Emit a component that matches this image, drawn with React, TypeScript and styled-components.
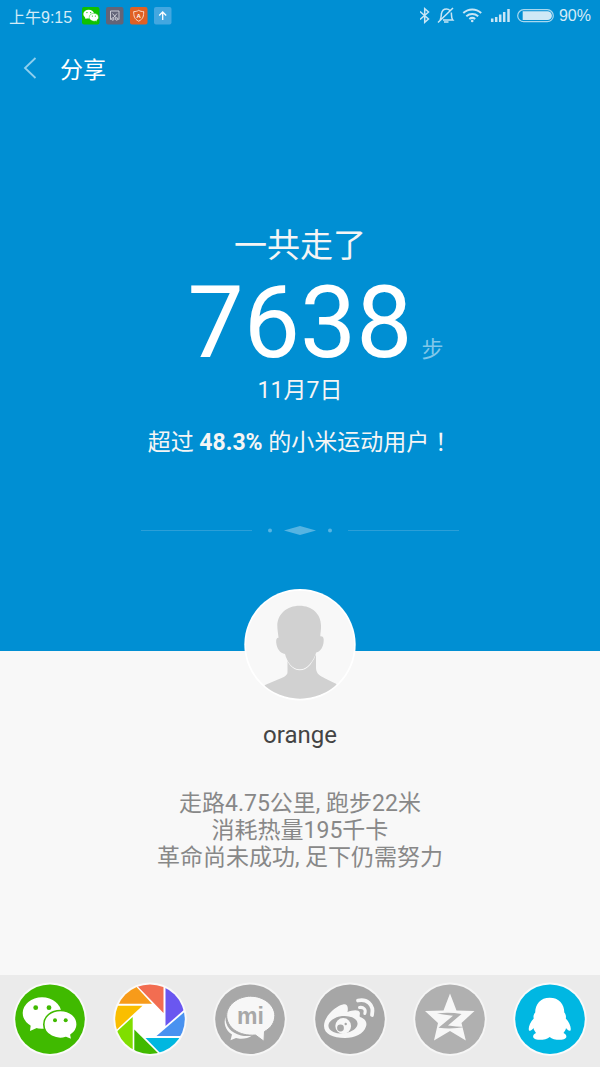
import React from 'react';
import styled, { createGlobalStyle } from 'styled-components';

const GlobalStyle = createGlobalStyle`
  * { box-sizing: border-box; }
  html, body { margin: 0; background: #f8f8f8; }
  body { font-family: Roboto, "Noto Sans CJK SC", sans-serif; }
`;

const Page = styled.div`
  display: flex;
  flex-direction: column;
  min-height: 100vh;
`;

const Hero = styled.section`
  background: #008fd3;
  color: #fff;
  padding-bottom: 115px;
`;

const StatusBar = styled.div`
  display: flex;
  align-items: center;
  justify-content: space-between;
  height: 32px;
  padding: 0 9px;
  color: #d4ebf7;
  font-family: "Liberation Sans", "Noto Sans CJK SC", sans-serif;
  font-size: 16px;
`;

const StatusGroup = styled.div<{ $gap: number }>`
  display: flex;
  align-items: center;
  gap: ${(p) => p.$gap}px;
`;

const Clock = styled.span`
  padding-right: 4px;
`;

const Header = styled.header`
  display: flex;
  align-items: center;
  gap: 20px;
  height: 72px;
  padding: 0 20px;
`;

const BackButton = styled.button`
  display: flex;
  padding: 0;
  border: 0;
  background: none;
`;

const Title = styled.h1`
  margin: 0;
  padding-top: 5px;
  font-size: 23px;
  font-weight: 400;
  line-height: 32px;
`;

const Summary = styled.div`
  display: flex;
  flex-direction: column;
  align-items: center;
  padding-top: 120px;
`;

const Line = styled.p<{ $size: number; $height: number }>`
  margin: 0;
  font-size: ${(p) => p.$size}px;
  line-height: ${(p) => p.$height}px;
  color: #f5f5f5;
`;

/* Traditional Chinese fonts centre full-width punctuation in its cell. */
const CentredMark = styled.span`
  font-family: "Noto Sans CJK TC", sans-serif;
  line-height: 1;
`;

const Steps = styled.div`
  display: grid;
  grid-template-columns: 1fr auto 1fr;
  align-items: baseline;
  column-gap: 9px;
  width: 100%;
  height: 97px;
`;

const StepCount = styled.strong`
  grid-column: 2;
  font-size: 100px;
  font-weight: 400;
  line-height: 110px;
`;

const StepUnit = styled.span`
  font-size: 22px;
  color: #80c7e9;
`;

const Divider = styled.svg`
  display: block;
  margin: 55px auto 0;
`;

const Profile = styled.section`
  flex: 1;
  display: flex;
  flex-direction: column;
  align-items: center;
  background: #f8f8f8;
`;

const Avatar = styled.svg`
  display: block;
  margin-top: -62px;
`;

const Name = styled.h2`
  margin: 20px 0 0;
  color: #444;
  font-size: 24px;
  font-weight: 400;
  line-height: 28px;
`;

const Details = styled.p`
  margin: 41px 0 0;
  color: #888;
  font-size: 23px;
  line-height: 27px;
  text-align: center;
`;

const ShareBar = styled.nav`
  display: flex;
  justify-content: space-around;
  padding: 6px 0 10px;
  background: #ebebeb;
`;

const ShareButton = styled.button`
  display: flex;
  padding: 0;
  border: 0;
  background: none;
`;

const WeChatMark = ({ ground }: { ground: string }) => (
  <g>
    <ellipse cx="30" cy="32" rx="19.300" ry="15.700" fill="#fff" />
    <path fill="#fff" d="M19 42L18 50L27 46z" />
    <circle cx="23.700" cy="26.700" r="2.400" fill={ground} />
    <circle cx="37" cy="26.700" r="2.400" fill={ground} />
    <path
      fill="#fff"
      stroke={ground}
      strokeWidth="1.600"
      d="M60 59L54 56.500C45 59.500 31.800 54.500 31.800 43.500C31.800 35.500 39 29.500 48.500 29.500C58 29.500 65.200 35.500 65.200 43.500C65.200 48 62.500 51.500 59 54z"
    />
    <circle cx="43" cy="39.300" r="2" fill={ground} />
    <circle cx="53.700" cy="39.300" r="2" fill={ground} />
  </g>
);

const Disc = ({ fill, ring, children }: { fill: string; ring: string; children: React.ReactNode }) => (
  <svg width="76" height="76" viewBox="0 0 76 76" aria-hidden="true">
    <circle cx="38" cy="38.200" r="36.700" fill={ring} />
    <circle cx="38" cy="38.200" r="34.800" fill={fill} />
    {children}
  </svg>
);

const WeChat = () => (
  <Disc fill="#40ba00" ring="#fafafa">
    <WeChatMark ground="#40ba00" />
  </Disc>
);

const Moments = () => (
  <Disc fill="#fff" ring="#fafafa">
    <clipPath id="shutter">
      <circle cx="38" cy="38.200" r="34.800" />
    </clipPath>
    <g clipPath="url(#shutter)">
      <path fill="#f26d51" d="M26.300 6L20 0H51.500V32z" />
      <path fill="#6a57f0" d="M53.500 0H76V25.500L53.500 45z" />
      <path fill="#4992f0" d="M76 28V55H44.500z" />
      <path fill="#00b7e0" d="M33.500 57H76V76H52z" />
      <path fill="#41b900" d="M22.300 48.500L50 76H22.300z" />
      <path fill="#80de00" d="M0 55L20.700 36V76H0z" />
      <path fill="#fabe00" d="M0 24.700H30.500L0 53z" />
      <path fill="#f79b1a" d="M0 22.700V0H19L40 22.700z" />
    </g>
  </Disc>
);

const MiTalk = () => (
  <Disc fill="#a8a8a8" ring="#f5f5f5">
    <path fill="#f7f7f7" d="M13.500 36C13 45 19 52 29 54.500C34 55.500 37 55 40 54.500C36 58 28 58.500 24 57L18.500 59.200L20 53.500C13 49 11.500 42 13.500 36z" />
    <path
      fill="#f7f7f7"
      stroke="#a8a8a8"
      d="M38.700 15.200C51.500 15.200 62.800 24 62.800 34.500C62.800 41.500 59 47 52.500 50.500L52 60.300L43.500 54C27 55.500 14.700 46.500 14.700 34.500C14.700 24 26 15.200 38.700 15.200z"
    />
    <text x="38.500" y="43" fill="#a8a8a8" fontFamily="Liberation Sans" fontWeight="700" fontSize="23" textAnchor="middle">
      mi
    </text>
  </Disc>
);

const Weibo = () => (
  <Disc fill="#a6a6a6" ring="#f5f5f5">
    <path fill="#f7f7f7" d="M12 45C12 35 24 25 31 23.500C35.500 22.500 36.500 26.500 35.500 31C40 29 47 28 47.800 31.500C48.300 33.500 47 35 48 36C53 37.500 55.500 41 54 45.500C51.500 53 43 57 33 57C21 57 12 53 12 45z" />
    <ellipse cx="31" cy="43.700" rx="14.600" ry="8.700" fill="#a6a6a6" transform="rotate(-6 31 43.700)" />
    <circle cx="31.200" cy="45" r="7.900" fill="#f7f7f7" />
    <circle cx="28.500" cy="47" r="3.400" fill="#a6a6a6" />
    <circle cx="33.700" cy="43" r="1.200" fill="#a6a6a6" />
    <g fill="none" stroke="#f7f7f7" strokeLinecap="round">
      <path strokeWidth="3.800" d="M46 19.500C54 17.500 62.500 23 60 34" />
      <path strokeWidth="3" d="M47.500 26.500C51.500 25.800 54.300 28.500 52.800 32.500" />
    </g>
  </Disc>
);

const Qzone = () => (
  <Disc fill="#b0b0b0" ring="#f5f5f5">
    <path fill="#f7f7f7" d="M38 12.500L44.500 29.500L62.500 30L49.500 42L53.800 59.500L38 50L22 59.500L26 42L13 30L31.500 29.500z" />
    <path fill="#b0b0b0" d="M25 32.500Q37 31 49.500 33L36 44.500Q44 45.500 53 46Q39 48.500 26.500 46.700L41 34.800Q33 34 25 32.500z" />
  </Disc>
);

const QQ = () => (
  <Disc fill="#00b7e2" ring="#fafafa">
    <path
      fill="#fff"
      d="M37.700 16.700C47 16.700 52.300 23 52.300 31.500C54 33.500 54.200 35.500 53.800 37.500C57.500 41.500 59.500 46.500 58.500 49.500C57 50.500 55 48.500 54 47C54 48.500 52.500 50.500 51.500 52C56 54 55.500 58.800 48 58.800C43.500 58.800 39.700 58 37.700 56C35.700 58 31.700 58.800 27.500 58.800C20 58.800 19.500 54 24 52C23 50.500 21.500 48.500 21.500 47C20.500 48.500 18.500 50.500 17 49.500C16 46.500 18 41.500 21.700 37.500C21.200 35.500 21.500 33.500 23.200 31.500C23.200 23 28.500 16.700 37.700 16.700z"
    />
  </Disc>
);

const Tile = ({ fill, children }: { fill: string; children: React.ReactNode }) => (
  <svg width="18" height="18" viewBox="0 0 18 18" aria-hidden="true">
    <rect width="17.500" height="17.500" rx="2" fill={fill} />
    {children}
  </svg>
);

const shareTargets = [
  { label: '微信', Icon: WeChat },
  { label: '朋友圈', Icon: Moments },
  { label: '米聊', Icon: MiTalk },
  { label: '微博', Icon: Weibo },
  { label: 'QQ空间', Icon: Qzone },
  { label: 'QQ', Icon: QQ },
];

export default function App() {
  return (
    <Page>
      <GlobalStyle />
      <Hero>
        <StatusBar>
          <StatusGroup $gap={6}>
            <Clock>上午9:15</Clock>
            <Tile fill="#0fc100">
              <g transform="translate(-1.700 -1.900) scale(.28)">
                <WeChatMark ground="#0fc100" />
              </g>
            </Tile>
            <Tile fill="#636478">
              <g fill="none" stroke="#d6d6de" strokeWidth=".9">
                <path d="M5 12.500H4.500V4H13V12.500H12.500M6.500 6.500L10.200 11M11 6.500L7.300 11" />
                <circle cx="6.800" cy="12" r="1.200" />
                <circle cx="10.700" cy="12" r="1.200" />
              </g>
            </Tile>
            <Tile fill="#e06024">
              <path fill="none" stroke="#fbd9c6" d="M8.700 3.300C10.200 4.300 11.700 4.600 13.700 4.600C13.700 9 13.200 12 8.700 14.200C4.200 12 3.700 9 3.700 4.600C5.700 4.600 7.200 4.300 8.700 3.300z" />
              <text x="8.700" y="10.800" fill="#fff" fontFamily="Liberation Sans" fontWeight="700" fontSize="6" textAnchor="middle">
                A
              </text>
            </Tile>
            <Tile fill="#43a7e0">
              <path fill="none" stroke="#fff" strokeWidth="1.300" d="M8.700 13V5M5.200 8.500L8.700 5L12.200 8.500" />
            </Tile>
          </StatusGroup>
          <StatusGroup $gap={5}>
            <svg width="92" height="20" viewBox="0 0 92 20" fill="none" stroke="#c9e6f5" strokeWidth="1.500" aria-hidden="true">
              <path d="M0 5.500L8.500 13L4.700 16.300V2.700L8.500 6L0 13.500" />
              <path d="M18 16.500L33 2M20 14C21.500 12 21 10 21.500 7.500C22 4.500 24 3 26.500 3C28 3 29 3.500 30 4.500M31.300 6.500C31.700 9 31 12 32.800 14H23" />
              <path d="M24 16H28.500" />
              <path strokeWidth="2" d="M43.300 7C48.500 2.300 56 2.300 61.200 7M46.300 10.300C49.800 7.300 54.700 7.300 58.200 10.300" />
              <path strokeWidth="2" d="M49.300 13C51 11.700 53.500 11.700 55.200 13" />
              <circle cx="52.200" cy="15" r="1.300" fill="#c9e6f5" stroke="none" />
              <path strokeWidth="2.500" d="M72.200 16V12.500M76.200 16V11M80.200 16V8.500M84.200 16V6M88.500 16V3" />
            </svg>
            <svg width="37" height="14" viewBox="0 0 37 14" aria-hidden="true">
              <rect x=".7" y=".7" width="35.600" height="12" rx="6" fill="none" stroke="#a9d8ef" strokeWidth="1.200" />
              <path fill="#cfe9f6" d="M5.700 2.300H30.500A4.400 4.400 0 0 1 30.500 11.100H5.700z" />
            </svg>
            <span>90%</span>
          </StatusGroup>
        </StatusBar>
        <Header>
          <BackButton type="button" aria-label="返回">
            <svg width="20" height="24" viewBox="0 0 20 24" fill="none" stroke="#8fcfee" strokeWidth="1.800" aria-hidden="true">
              <path d="M15.500 2L5 12L15.500 22" />
            </svg>
          </BackButton>
          <Title>分享</Title>
        </Header>
        <Summary>
          <Line $size={33} $height={44}>一共走了</Line>
          <Steps>
            <StepCount>7638</StepCount>
            <StepUnit>步</StepUnit>
          </Steps>
          <Line $size={23} $height={52}>11月7日</Line>
          <Line $size={23} $height={52}>
            超过 <b>48.3%</b> 的小米运动用户<CentredMark>！</CentredMark>
          </Line>
        </Summary>
        <Divider width="320" height="12" viewBox="0 0 320 12" fill="#55b4e2" aria-hidden="true">
          <path fill="#2b9fd8" d="M1 6H112V7H1zM208 6H319V7H208z" />
          <circle cx="130" cy="6.500" r="2" />
          <circle cx="190" cy="6.500" r="2" />
          <path d="M144 6.500L160 2L176 6.500L160 11z" />
        </Divider>
      </Hero>
      <Profile>
        <Avatar width="112" height="112" viewBox="0 0 112 112" role="img" aria-label="orange">
          <clipPath id="portrait">
            <circle cx="56" cy="55.700" r="54" />
          </clipPath>
          <circle cx="56" cy="55.700" r="55.700" fill="#fff" />
          <circle cx="56" cy="55.700" r="54" fill="#f8f8f8" />
          <g clipPath="url(#portrait)" fill="#d1d1d1">
            <path d="M43.500 66V83C43.500 87 39 88.500 34 90.500L21 96L10 112H104L92 94.700C86 92 82 90 77.500 87.500C73 85 72 82 72 78V64z" />
            <path
              stroke="#f8f8f8"
              strokeWidth="1.200"
              d="M41 65C43 72.500 48 80.700 55.800 80.700C63.500 80.700 69.500 72 72 63.700"
            />
            <path d="M55.500 16.700C68 16.700 77 25 77 36.500C77.200 41 76.300 44.500 76.300 47.300C79 47 80 49 79.700 52C79.300 58 76.500 62.500 72.200 63.500C69.500 72 63.500 80.300 55.800 80.300C48 80.300 43 72.500 41 65C36 64.500 32.800 59.500 32.200 53.500C32 50.500 32.500 48.800 34.500 48.800C34.300 45 33.300 41 33.300 36.500C33.500 25 43 16.700 55.500 16.700z" />
          </g>
        </Avatar>
        <Name>orange</Name>
        <Details>
          走路4.75公里, 跑步22米
          <br />
          消耗热量195千卡
          <br />
          革命尚未成功, 足下仍需努力
        </Details>
      </Profile>
      <ShareBar>
        {shareTargets.map(({ label, Icon }) => (
          <ShareButton key={label} type="button" aria-label={label}>
            <Icon />
          </ShareButton>
        ))}
      </ShareBar>
    </Page>
  );
}
